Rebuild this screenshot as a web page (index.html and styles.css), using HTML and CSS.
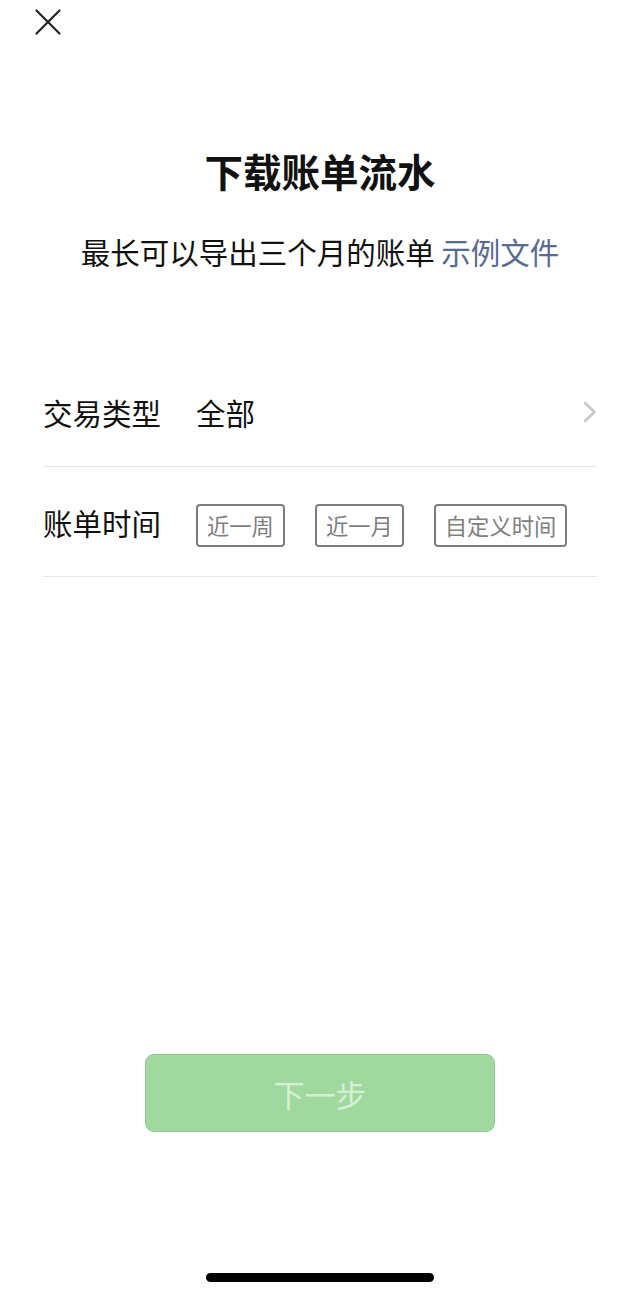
FILE: index.html
```html
<!DOCTYPE html>
<html lang="zh-CN">
<head>
<meta charset="utf-8">
<title>下载账单流水</title>
<link rel="stylesheet" href="styles.css">
</head>
<body>
<div class="page">
  <div class="topbar">
    <svg class="close" width="26" height="26" viewBox="0 0 26 26" aria-label="关闭">
      <path d="M1.5 1.5 L24.5 24.5 M24.5 1.5 L1.5 24.5" stroke="#222" stroke-width="2.2" stroke-linecap="round" fill="none"/>
    </svg>
  </div>
  <h1 class="title">下载账单流水</h1>
  <p class="subtitle">最长可以导出三个月的账单 <span class="link">示例文件</span></p>
  <div class="list">
    <div class="row">
      <div class="label">交易类型</div>
      <div class="value">全部</div>
      <svg class="chevron" width="14" height="22" viewBox="0 0 14 22">
        <path d="M2 2 L11.5 11 L2 20" stroke="#c8c8c8" stroke-width="2.6" fill="none" stroke-linecap="round" stroke-linejoin="round"/>
      </svg>
    </div>
    <div class="row">
      <div class="label">账单时间</div>
      <div class="chips">
        <span class="chip">近一周</span>
        <span class="chip">近一月</span>
        <span class="chip">自定义时间</span>
      </div>
    </div>
  </div>
  <div class="actions">
    <button class="btn" type="button">下一步</button>
  </div>
  <div class="home-indicator"></div>
</div>
</body>
</html>
```
FILE: styles.css
```css
* { box-sizing: border-box; }
html, body {
  margin: 0;
  padding: 0;
  background: #fff;
}
body {
  font-family: "Noto Sans CJK SC", "Noto Sans", sans-serif;
  color: #111;
}
.page {
  width: 640px;
  height: 1297px;
  display: flex;
  flex-direction: column;
}
.topbar {
  height: 46px;
  padding: 9px 0 0 35px;
}
.close { display: block; }
.title {
  margin: 97px 0 0;
  text-align: center;
  font-size: 38.5px;
  font-weight: 700;
  line-height: 54px;
  color: #111;
}
.subtitle {
  margin: 33px 0 0;
  text-align: center;
  font-size: 29.5px;
  line-height: 42px;
  color: #111;
}
.link { color: #576b95; }
.list {
  margin: 85px 43px 0;
}
.row {
  height: 110px;
  display: flex;
  align-items: center;
  border-bottom: 1px solid #e6e6e6;
}
.label {
  flex: 0 0 153px;
  font-size: 29.5px;
  line-height: 40px;
}
.value {
  flex: 1;
  font-size: 29.5px;
  line-height: 40px;
}
.chevron { display: block; }
.chips {
  display: flex;
  gap: 30px;
  margin-top: 7px;
}
.chip {
  height: 43px;
  padding: 0 9px;
  border: 2px solid #7d7d7d;
  border-radius: 4px;
  font-size: 22.3px;
  line-height: 39px;
  color: #808080;
}
.actions {
  margin-top: 477px;
  display: flex;
  justify-content: center;
}
.btn {
  width: 350px;
  height: 78px;
  border: 1px solid #8fc98e;
  border-radius: 9px;
  background: #9fd99e;
  color: rgba(255, 255, 255, 0.6);
  font-family: "Noto Sans CJK SC", "Noto Sans", sans-serif;
  font-size: 31px;
  padding: 0;
}
.home-indicator {
  width: 228px;
  height: 9px;
  margin: 141px auto 0;
  border-radius: 5px;
  background: #000;
}
```
